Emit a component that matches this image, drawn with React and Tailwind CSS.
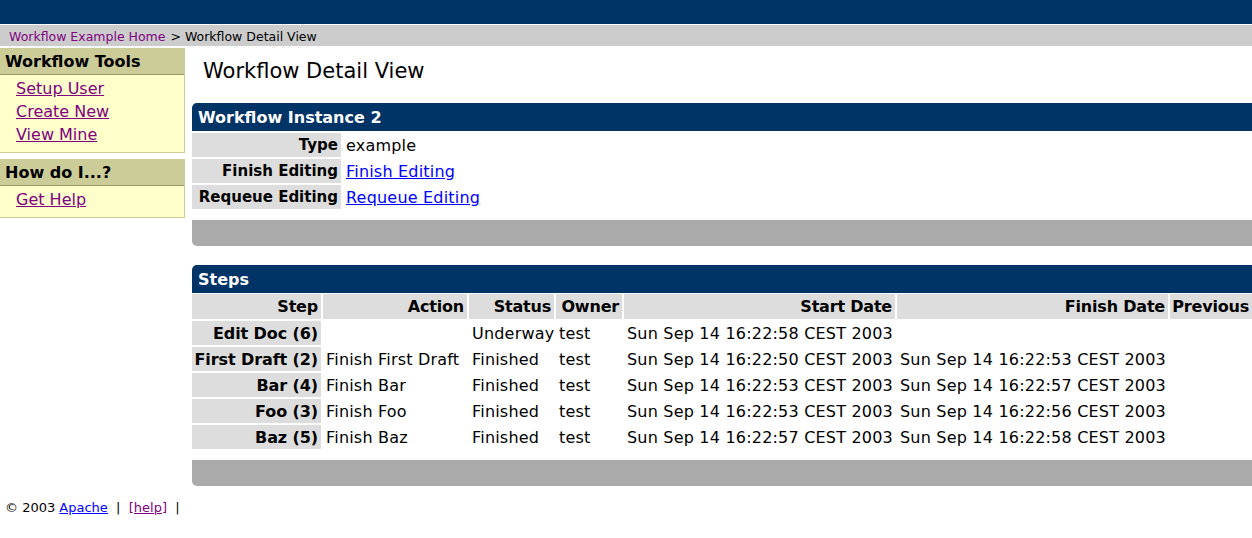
const steps = [
  { step: 'Edit Doc (6)', action: '', status: 'Underway', owner: 'test', start: 'Sun Sep 14 16:22:58 CEST 2003', finish: '' },
  { step: 'First Draft (2)', action: 'Finish First Draft', status: 'Finished', owner: 'test', start: 'Sun Sep 14 16:22:50 CEST 2003', finish: 'Sun Sep 14 16:22:53 CEST 2003' },
  { step: 'Bar (4)', action: 'Finish Bar', status: 'Finished', owner: 'test', start: 'Sun Sep 14 16:22:53 CEST 2003', finish: 'Sun Sep 14 16:22:57 CEST 2003' },
  { step: 'Foo (3)', action: 'Finish Foo', status: 'Finished', owner: 'test', start: 'Sun Sep 14 16:22:53 CEST 2003', finish: 'Sun Sep 14 16:22:56 CEST 2003' },
  { step: 'Baz (5)', action: 'Finish Baz', status: 'Finished', owner: 'test', start: 'Sun Sep 14 16:22:57 CEST 2003', finish: 'Sun Sep 14 16:22:58 CEST 2003' },
]

const headers = ['Step', 'Action', 'Status', 'Owner', 'Start Date', 'Finish Date', 'Previous']

function SideBox({ title, links }) {
  return (
    <div className="border-r border-b border-[#cccc99] bg-[#ffffcc]">
      <div className="h-[27px] bg-[#cccc99] border-b border-[#999966] pl-[5px] pt-px flex items-center font-bold text-[16px]">
        {title}
      </div>
      <div className="pt-[2px] pb-[6px] pl-[16px] text-[16px] leading-[23px]">
        {links.map((l) => (
          <div key={l}>
            <a href="#" className="text-[#800080] underline">{l}</a>
          </div>
        ))}
      </div>
    </div>
  )
}

// label cells in the instance box run a touch smaller than the step table headers
function Cell({ children, label, head, small }) {
  const base = 'flex items-center whitespace-nowrap px-[3px] pt-px'
  if (head) return <div className={base + ' h-[25px] bg-[#dddddd] font-bold justify-end text-[16px] tracking-[-0.2px]'}>{children}</div>
  if (label) return <div className={base + ' h-[24px] bg-[#dddddd] font-bold justify-end ' + (small ? 'text-[15px]' : 'text-[16px] tracking-[-0.1px]')}>{children}</div>
  return <div className={base + ' h-[24px] text-[16px] tracking-[0.2px]'}>{children}</div>
}

export default function App() {
  return (
    <div className="w-[1252px] h-[538px] overflow-hidden bg-white text-black font-['DejaVu_Sans',Verdana,sans-serif]">
      <div className="h-[24px] bg-[#003366]" />
      <div className="mt-px h-[21px] bg-[#cccccc] pl-[9px] pt-[3px] flex items-center text-[12.5px]">
        <a href="#" className="text-[#800080]">Workflow Example Home</a>
        <span className="ml-[5px]">&gt; Workflow Detail View</span>
      </div>

      <div className="mt-[2px] flex gap-[7px]">
        <div className="w-[185px] shrink-0 flex flex-col gap-[6px]">
          <SideBox title="Workflow Tools" links={['Setup User', 'Create New', 'View Mine']} />
          <SideBox title="How do I...?" links={['Get Help']} />
        </div>

        <div className="flex-1">
          <div className="h-[55px] pt-[11px] pl-[11px] text-[21px] leading-[24px]">Workflow Detail View</div>

          <div className="h-[28px] bg-[#003366] rounded-tl-[5px] pl-[6px] pt-px flex items-center text-white font-bold text-[16px]">
            Workflow Instance 2
          </div>
          <div className="mt-[2px] grid grid-cols-[149px_1fr] gap-[2px]">
            <Cell label small>Type</Cell>
            <Cell>example</Cell>
            <Cell label small>Finish Editing</Cell>
            <Cell><a href="#" className="text-[#0000ff] underline">Finish Editing</a></Cell>
            <Cell label small>Requeue Editing</Cell>
            <Cell><a href="#" className="text-[#0000ff] underline">Requeue Editing</a></Cell>
          </div>
          <div className="mt-[11px] h-[26px] bg-[#aaaaaa] rounded-bl-[5px]" />

          <div className="mt-[19px] h-[28px] bg-[#003366] rounded-tl-[5px] pl-[6px] pt-px flex items-center text-white font-bold text-[16px]">
            Steps
          </div>
          <div className="mt-px grid grid-cols-[129px_144px_85px_66px_271px_271px_82px] gap-x-[2px] gap-y-[2px]">
            {headers.map((h) => (
              <Cell key={h} head>{h}</Cell>
            ))}
            {steps.map((s) => (
              <div key={s.step} className="contents">
                <Cell label>{s.step}</Cell>
                <Cell>{s.action}</Cell>
                <Cell>{s.status}</Cell>
                <Cell>{s.owner}</Cell>
                <Cell>{s.start}</Cell>
                <Cell>{s.finish}</Cell>
                <Cell />
              </div>
            ))}
          </div>
          <div className="mt-[11px] h-[26px] bg-[#aaaaaa] rounded-bl-[5px]" />
        </div>
      </div>

      <div className="mt-[14px] pl-[5px] text-[13px] leading-[16px] whitespace-pre">
        © 2003 <a href="#" className="text-[#0000ff] underline">Apache</a>  |  <a href="#" className="text-[#800080] underline">[help]</a>  |
      </div>
    </div>
  )
}
